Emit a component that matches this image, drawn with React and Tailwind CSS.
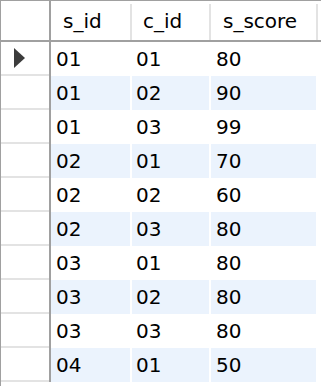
const rows = [
  ["01", "01", "80"],
  ["01", "02", "90"],
  ["01", "03", "99"],
  ["02", "01", "70"],
  ["02", "02", "60"],
  ["02", "03", "80"],
  ["03", "01", "80"],
  ["03", "02", "80"],
  ["03", "03", "80"],
  ["04", "01", "50"],
];

function Caret() {
  return (
    <svg width="11" height="20" viewBox="0 0 11 20" className="block">
      <path d="M0 0 L11 10 L0 20 Z" fill="#3c3c3c" />
    </svg>
  );
}

export default function App() {
  return (
    <div
      className="w-[321px] h-[386px] bg-white overflow-hidden border-t border-l border-[#a0a0a0] text-black"
      style={{ fontFamily: '"DejaVu Sans", sans-serif' }}
    >
      {/* column headers */}
      <div className="flex h-[41px] border-b-2 border-[#a0a0a0] text-[20px]">
        <div className="w-[50px] shrink-0 border-r-2 border-[#a0a0a0]" />
        <div className="w-[79px] shrink-0 flex items-center pl-[12px]">s_id</div>
        <div className="w-[2px] shrink-0 mt-[3px] bg-[#e3e3e3]" />
        <div className="w-[77px] shrink-0 flex items-center pl-[11px]">c_id</div>
        <div className="w-[2px] shrink-0 mt-[3px] bg-[#e3e3e3]" />
        <div className="w-[105px] shrink-0 flex items-center pl-[12px]">s_score</div>
        <div className="w-[2px] shrink-0 mt-[3px] bg-[#e3e3e3]" />
        <div className="flex-1" />
      </div>

      {/* data rows */}
      {rows.map((r, i) => {
        const shaded = i % 2 === 1;
        const cell = shaded ? "bg-[#ebf3fd]" : "bg-white";
        return (
          <div key={i} className="flex h-[34px] text-[20px]">
            <div className="w-[50px] shrink-0 border-r-2 border-[#a0a0a0] flex flex-col">
              <div className="flex-1 flex items-center pl-[13px]">
                {i === 0 && <Caret />}
              </div>
              <div className="h-[2px] bg-[#e3e3e3]" />
            </div>
            <div className={`w-[79px] shrink-0 flex items-center pl-[5px] ${cell}`}>{r[0]}</div>
            <div className="w-[2px] shrink-0 bg-white" />
            <div className={`w-[77px] shrink-0 flex items-center pl-[4px] ${cell}`}>{r[1]}</div>
            <div className="w-[2px] shrink-0 bg-white" />
            <div className={`w-[105px] shrink-0 flex items-center pl-[5px] ${cell}`}>{r[2]}</div>
            <div className="flex-1 bg-white" />
          </div>
        );
      })}
    </div>
  );
}
